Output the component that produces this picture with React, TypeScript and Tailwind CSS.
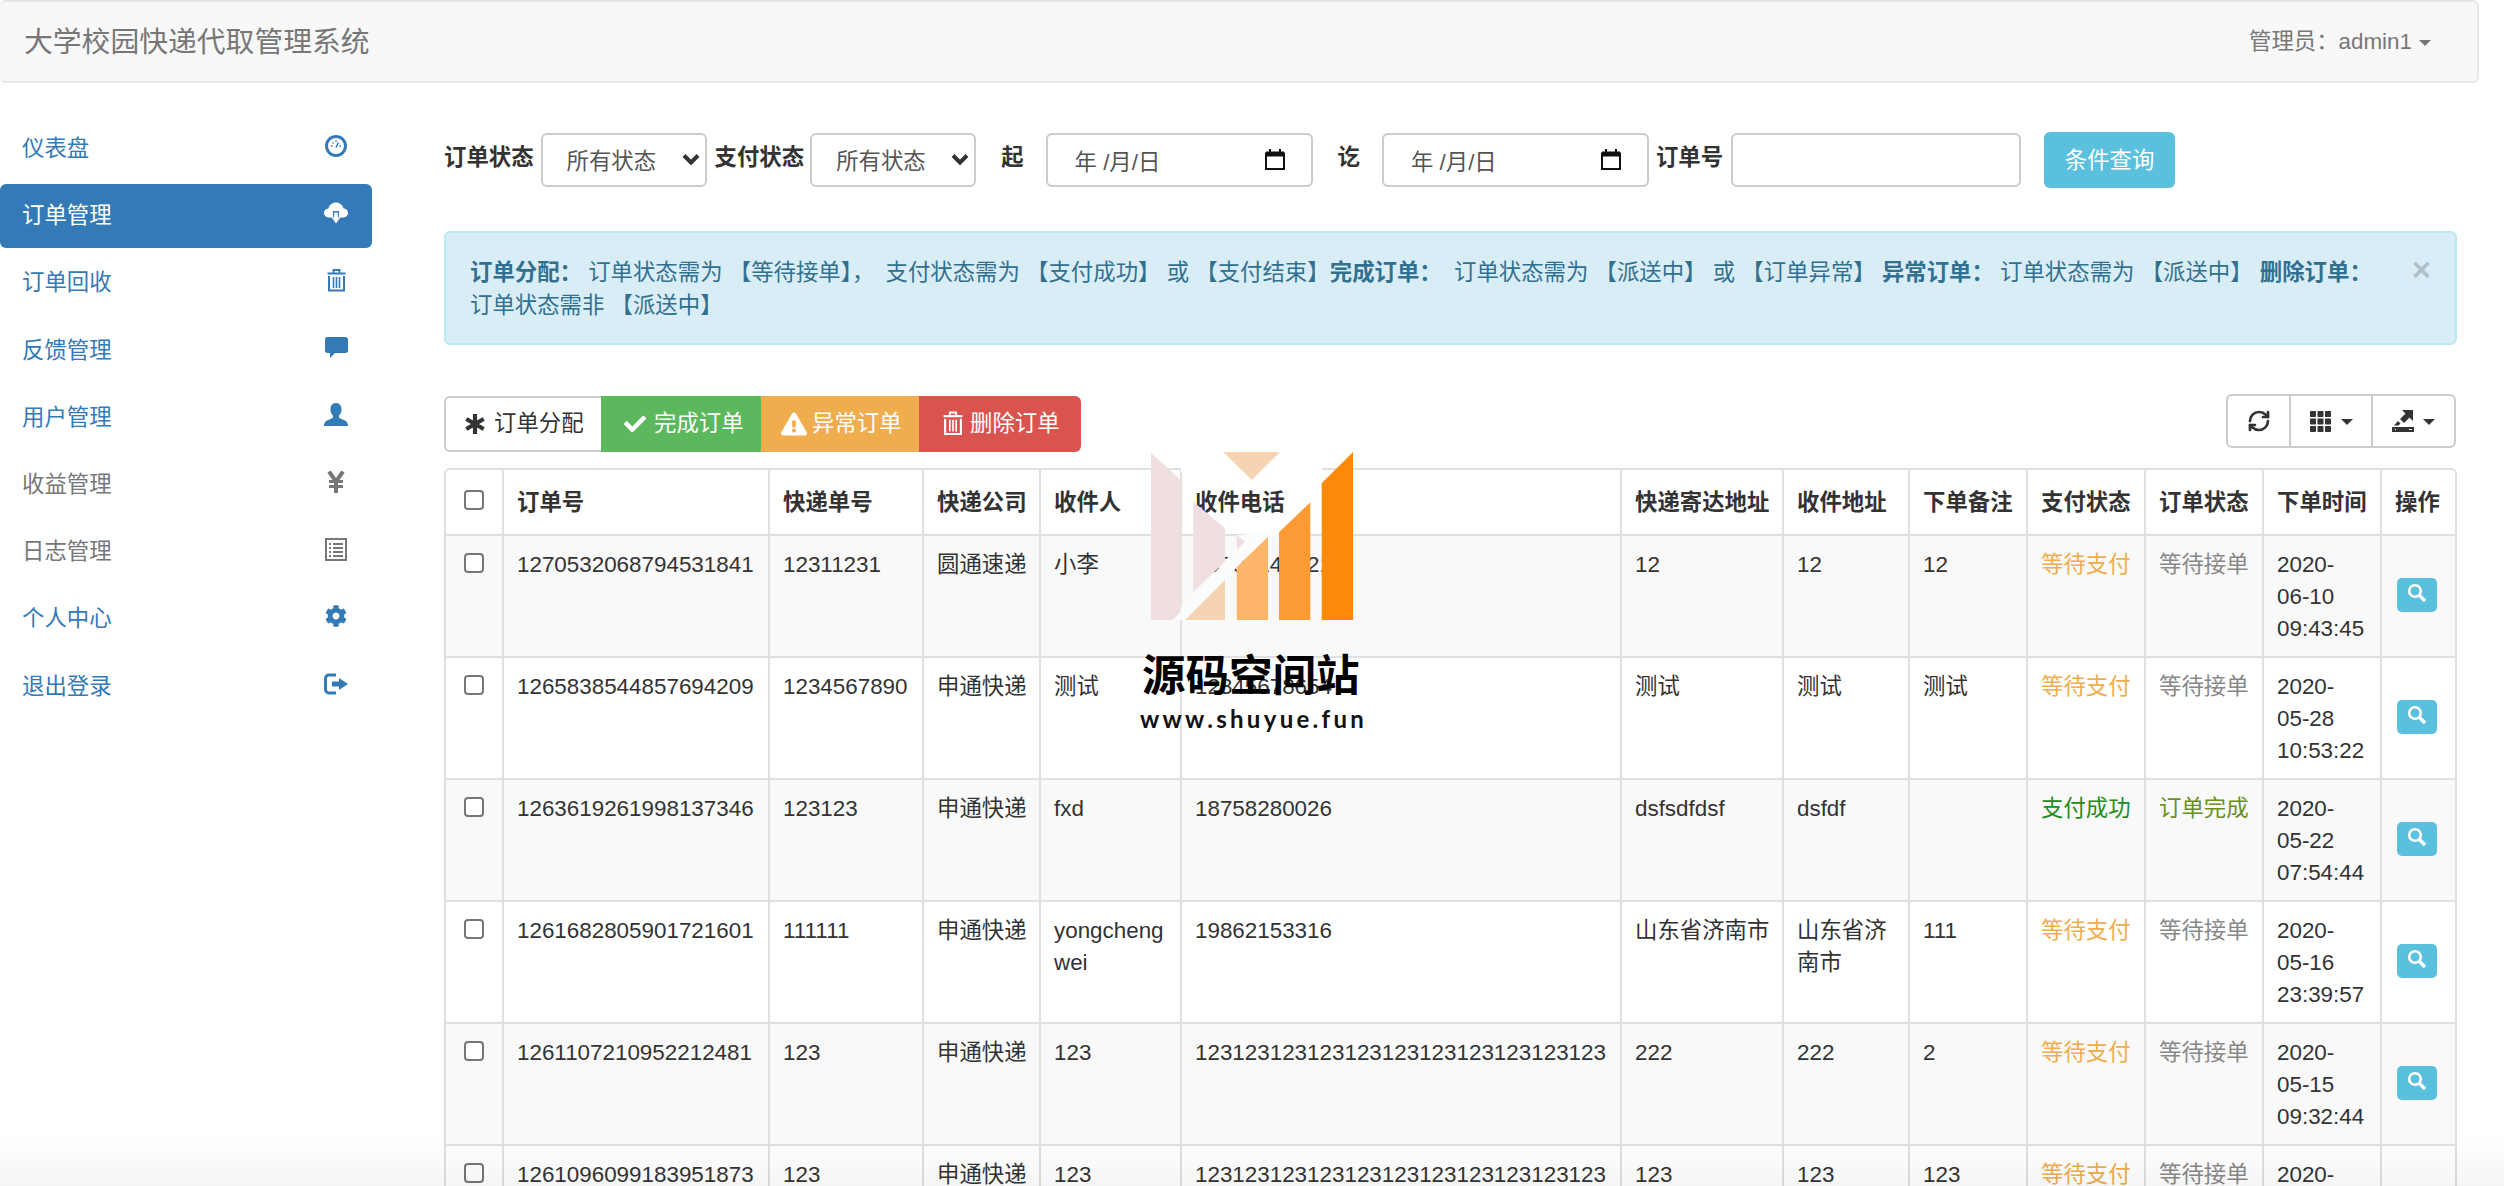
import type { ReactNode } from "react"
import { RefreshCw } from "lucide-react"
import { FaCheck, FaCog, FaExclamationTriangle } from "react-icons/fa"

const GaugeIcon = () => (
  <svg width="22" height="22" viewBox="0 0 22 22" fill="none" stroke="currentColor">
    <circle cx="11" cy="11" r="9.5" strokeWidth="3" />
    <path d="M11 12.5 13.5 7.5" strokeWidth="1.6" />
    <path d="M6 11h1.5M14.5 11H16M11 5.5V7M7.5 7.5l1 1" strokeWidth="1.4" />
  </svg>
)

const CloudIcon = () => (
  <svg width="24" height="22" viewBox="0 0 24 22" fill="currentColor">
    <path
      fillRule="evenodd"
      d="M5 15.5C2.2 15.5 0 13.6 0 11s2-4.4 4.4-4.5C5.3 3 8.2 0.5 12 0.5c3.7 0 6.5 2.4 7.5 5.7 2.600 0.300 4.500 2.200 4.500 4.800 0 2.600-2.200 4.500-5 4.500h-2.200l-1.800 0V9H9v6.500z"
    />
    <path d="M10.200 10.500h3.600v4.700h2.700L12 21.500l-4.500-6.300h2.700z" />
  </svg>
)

const TrashIcon = ({ w = 19, h = 24 }: { w?: number; h?: number }) => (
  <svg width={w} height={h} viewBox="0 0 19 24" fill="none" stroke="currentColor">
    <path d="M0.500 5.500h18" strokeWidth="2" />
    <path d="M6.500 5V2h6v3" strokeWidth="1.800" />
    <path d="M2 8v14.500h15V8" strokeWidth="2" />
    <path d="M6.500 9v11M9.500 9v11M12.500 9v11" strokeWidth="1.600" />
  </svg>
)

const CommentIcon = () => (
  <svg width="23" height="21" viewBox="0 0 23 21" fill="currentColor">
    <path d="M2.500 0h18A2.500 2.500 0 0 1 23 2.500v11a2.500 2.500 0 0 1-2.500 2.500H10l-5 5v-5H2.500A2.500 2.500 0 0 1 0 13.500v-11A2.500 2.500 0 0 1 2.500 0z" />
  </svg>
)

const UserIcon = () => (
  <svg width="24" height="23" viewBox="0 0 24 23" fill="currentColor">
    <path d="M12 0c3.600 0 5.500 2.800 5.500 6.200 0 2.600-1 5-2.500 6.300v1.500c0 1 1 1.600 3 2.300 3.500 1.200 6 2.600 6 6.700H0c0-4.100 2.500-5.500 6-6.700 2-.7 3-1.300 3-2.300v-1.500C7.500 11.200 6.500 8.800 6.500 6.200 6.500 2.800 8.400 0 12 0z" />
  </svg>
)

const YenIcon = () => (
  <svg width="18" height="22" viewBox="0 0 18 22" fill="none" stroke="currentColor" strokeWidth="4">
    <path d="M2 0.500 9 10.500 16 0.500" />
    <path d="M9 9.500V22" />
    <path d="M2 10.500h14M2 15.500h14" strokeWidth="3" />
  </svg>
)

const ListAltIcon = () => (
  <svg width="22" height="23" viewBox="0 0 22 23" fill="none" stroke="currentColor">
    <rect x="1" y="1" width="20" height="21" strokeWidth="2" />
    <path d="M4 6h2M4 10h2M4 14h2M4 18h2M8 6h10M8 10h10M8 14h10M8 18h10" strokeWidth="1.800" />
  </svg>
)

const LogoutIcon = () => (
  <svg width="24" height="22" viewBox="0 0 24 22" fill="none" stroke="currentColor">
    <path d="M12 2H5a3.500 3.500 0 0 0-3.500 3.500v11A3.500 3.500 0 0 0 5 20h7" strokeWidth="3" />
    <path d="M8 8.500h7V5l9 6-9 6v-3.500H8z" fill="currentColor" stroke="none" />
  </svg>
)

const SearchIcon = () => (
  <svg width="20" height="20" viewBox="0 0 20 20" fill="none" stroke="currentColor">
    <circle cx="8" cy="8" r="5.800" strokeWidth="2.600" />
    <path d="M12.500 12.500 18 18" strokeWidth="3.400" />
  </svg>
)

const CalendarIcon = () => (
  <svg width="20" height="21" viewBox="0 0 20 21" fill="none" stroke="#111">
    <path d="M1 5h18v15H1z" strokeWidth="2" />
    <path d="M1 3h18v4H1z" fill="#111" strokeWidth="1" />
    <path d="M5 0v4M15 0v4" strokeWidth="2" />
  </svg>
)

const GridIcon = () => (
  <svg width="22" height="21" viewBox="0 0 22 21" fill="currentColor">
    {[0, 7.500, 15].map((y) =>
      [0, 7.500, 15].map((x) => <rect key={`${x}-${y}`} x={x} y={y} width="6" height="6" rx="0.800" />)
    )}
  </svg>
)

const ExportIcon = () => (
  <svg width="22" height="22" viewBox="0 0 22 22" fill="currentColor">
    <path fillRule="evenodd" d="M0 17h22v5H0zM3 19v1h1v-1zM17 19v1h3v-1z" />
    <path d="M10 0h11v11l-3.500-3.500-5.500 5.500-4-4 5.500-5.500z" />
    <path d="M2 15.500 6 11l2.500 2.500-2 2z" />
  </svg>
)

const AsteriskIcon = () => (
  <svg width="20" height="20" viewBox="0 0 20 20" fill="none" stroke="currentColor" strokeWidth="4.200">
    <path d="M10 0v20M1.300 5l17.400 10M1.300 15 18.700 5" />
  </svg>
)

const Caret = ({ className = "" }: { className?: string }) => (
  <span className={`inline-block h-0 w-0 border-x-[6px] border-t-[6px] border-x-transparent border-t-current ${className}`} />
)

const Chevron = () => (
  <svg width="18" height="12" viewBox="0 0 18 12" fill="none" stroke="#333" strokeWidth="4" className="pointer-events-none absolute right-[7px] top-[20px]">
    <path d="M2 2.500 9 9.500 16 2.500" />
  </svg>
)

type NavItem = { label: string; icon: ReactNode; active?: boolean; muted?: boolean }

const navItems: NavItem[] = [
  { label: "仪表盘", icon: <GaugeIcon /> },
  { label: "订单管理", icon: <CloudIcon />, active: true },
  { label: "订单回收", icon: <TrashIcon /> },
  { label: "反馈管理", icon: <CommentIcon /> },
  { label: "用户管理", icon: <UserIcon /> },
  { label: "收益管理", icon: <YenIcon />, muted: true },
  { label: "日志管理", icon: <ListAltIcon />, muted: true },
  { label: "个人中心", icon: <FaCog size={22} /> },
  { label: "退出登录", icon: <LogoutIcon /> },
]

const columns = ["订单号", "快递单号", "快递公司", "收件人", "收件电话", "快递寄达地址", "收件地址", "下单备注", "支付状态", "订单状态", "下单时间", "操作"]

type Order = {
  id: string
  no: string
  company: string
  name: ReactNode
  phone: string
  from: string
  to: string
  note: string
  pay: string
  state: string
  date: string
  time: string
}

const longNo = "123123123123123123123123123123123"

const orders: Order[] = [
  { id: "1270532068794531841", no: "12311231", company: "圆通速递", name: "小李", phone: "18306144221", from: "12", to: "12", note: "12", pay: "等待支付", state: "等待接单", date: "06-10", time: "09:43:45" },
  { id: "1265838544857694209", no: "1234567890", company: "申通快递", name: "测试", phone: "12345678654", from: "测试", to: "测试", note: "测试", pay: "等待支付", state: "等待接单", date: "05-28", time: "10:53:22" },
  { id: "1263619261998137346", no: "123123", company: "申通快递", name: "fxd", phone: "18758280026", from: "dsfsdfdsf", to: "dsfdf", note: "", pay: "支付成功", state: "订单完成", date: "05-22", time: "07:54:44" },
  { id: "1261682805901721601", no: "111111", company: "申通快递", name: <>yongcheng<br />wei</>, phone: "19862153316", from: "山东省济南市", to: "山东省济南市", note: "111", pay: "等待支付", state: "等待接单", date: "05-16", time: "23:39:57" },
  { id: "1261107210952212481", no: "123", company: "申通快递", name: "123", phone: longNo, from: "222", to: "222", note: "2", pay: "等待支付", state: "等待接单", date: "05-15", time: "09:32:44" },
  { id: "1261096099183951873", no: "123", company: "申通快递", name: "123", phone: longNo, from: "123", to: "123", note: "123", pay: "等待支付", state: "等待接单", date: "05-15", time: "09:10:21" },
]

const td = "border-r-2 border-b-2 border-[#e0e0e0] pl-[13px] pr-[8px] pt-[13px] align-top last:border-r-0"
const th = "h-[66px] border-r-2 border-b-2 border-[#e0e0e0] pl-[13px] pr-[8px] pt-[2px] text-left align-middle font-bold last:border-r-0"

function DateBox({ className }: { className: string }) {
  return (
    <div className={`flex h-[54px] w-[267px] items-center justify-between rounded-[6px] border-2 border-[#ccc] bg-white pl-[27px] pr-[26px] pt-[6px] text-[#555] ${className}`}>
      <span>年 /月/日</span>
      <span className="-mt-[8px]"><CalendarIcon /></span>
    </div>
  )
}

function StatusSelect({ className }: { className: string }) {
  return (
    <div className={`relative ${className}`}>
      <select className="h-[54px] w-[166px] appearance-none rounded-[6px] border-2 border-[#ccc] bg-white pl-[24px] pt-[3px] text-[#555]">
        <option>所有状态</option>
      </select>
      <Chevron />
    </div>
  )
}

function Watermark() {
  return (
    <div className="pointer-events-none absolute left-[1130px] top-[440px] w-[260px]">
      <svg width="260" height="190" viewBox="0 0 260 190">
        <path d="M51 28h141v4H51z" fill="#fff" />
        <path d="M43 180h12l40-40 12-13 31-31-23 5v-6h-8v8L95 122 43 175z" fill="#fbfcfd" />
        <path d="M115 93h34v5h-34z" fill="#fbfbfb" />
        <polygon points="21,12.700 50.700,40 50.700,171.700 42.700,180 21,180" fill="#f0dfe0" />
        <polygon points="63.300,61.700 95,88.300 95,121.700 63.300,151.700" fill="#f0dfe0" />
        <polygon points="106.700,95 115,101.700 106.700,110" fill="#f0dfe0" />
        <polygon points="93.300,12 150,12 121.700,40" fill="#f6d3b3" />
        <polygon points="55,180 95,140 95,180" fill="#f6d3b3" />
        <polygon points="106.700,180 106.700,127.300 138,96.700 138,180" fill="#fdb56a" />
        <polygon points="149,180 149,92.300 180.300,62.300 180.300,180" fill="#fc9a33" />
        <polygon points="191.700,180 191.700,43.300 223,12 223,180" fill="#fb8a0a" />
      </svg>
      <div className="ml-[12px] mt-[21px] whitespace-nowrap text-[43.500px] font-bold leading-[50px] text-black">源码空间站</div>
      <div className="ml-[10px] mt-[4px] whitespace-nowrap text-[24px] font-bold leading-[28px] tracking-[3.300px] text-[#111] [font-family:Lato,sans-serif]">www.shuyue.fun</div>
    </div>
  )
}

export default function App() {
  return (
    <div className="relative h-[1186px] w-[2504px] overflow-hidden bg-white text-[22.400px] leading-[32px] text-[#333] [font-family:Liberation_Sans,Noto_Sans_CJK_SC,sans-serif]">
      <nav className="flex h-[83px] w-[2479px] items-center justify-between rounded-[6px] border-2 border-l-0 border-[#e7e7e7] bg-[#f8f8f8] pl-[24px] pr-[46px] text-[#777]">
        <span className="text-[28.800px]">大学校园快递代取管理系统</span>
        <span className="flex items-center gap-[7px]">
          管理员：admin1
          <Caret className="mt-[3px]" />
        </span>
      </nav>

      <div className="flex">
        <aside className="w-[372px] shrink-0 pt-[34px]">
          {navItems.map((item) => (
            <a
              key={item.label}
              className={`mb-[3.200px] flex h-[64px] items-center justify-between rounded-[6px] pl-[22px] pr-[24px] ${
                item.active ? "bg-[#337ab7] text-white" : item.muted ? "text-[#777]" : "text-[#337ab7]"
              }`}
            >
              <span>{item.label}</span>
              <span className="-mt-[6px] flex w-[24px] justify-center">{item.icon}</span>
            </a>
          ))}
        </aside>

        <main className="ml-[72px] w-[2012px]">
          <div className="mt-[49px] flex h-[56px] items-center">
            <b className="-mt-[4px]">订单状态</b>
            <StatusSelect className="ml-[7px]" />
            <b className="-mt-[4px] ml-[8px]">支付状态</b>
            <StatusSelect className="ml-[6px]" />
            <b className="-mt-[4px] ml-[25px]">起</b>
            <DateBox className="ml-[22px]" />
            <b className="-mt-[4px] ml-[25px]">讫</b>
            <DateBox className="ml-[22px]" />
            <b className="-mt-[4px] ml-[7px]">订单号</b>
            <input className="ml-[8px] h-[54px] w-[290px] rounded-[6px] border-2 border-[#ccc] bg-white" />
            <button className="ml-[23px] h-[56px] w-[131px] rounded-[6px] bg-[#5bc0de] pt-[2px] text-white">条件查询</button>
          </div>

          <div className="mt-[43px] flex h-[114px] w-[2013px] justify-between rounded-[6px] border-2 border-[#bce8f1] bg-[#d9edf7] pl-[24px] pr-[24px] pt-[23px] leading-[33px] text-[#31708f]">
            <p>
              <b>订单分配：</b> 订单状态需为 【等待接单】， <span className="ml-[5px]">支付状态需为</span> 【支付成功】 或 【支付结束】 <b className="-ml-[6px] mr-[6px]">完成订单：</b> 订单状态需为 【派送中】 或 【订单异常】 <b>异常订单：</b> 订单状态需为 【派送中】 <b className="ml-[1px]">删除订单：</b>
              <br />
              订单状态需非 【派送中】
            </p>
            <span className="-mt-[3px] text-[33px] font-bold leading-[33px] text-black/20">×</span>
          </div>

          <div className="mt-[49px] flex h-[58px] items-start justify-between">
            <div className="mt-[2px] flex h-[56px] items-stretch">
              <button className="flex w-[157px] items-center gap-[9px] rounded-l-[6px] border-2 border-r-0 border-[#ccc] bg-white pl-[19px]">
                <AsteriskIcon />
                订单分配
              </button>
              <button className="flex w-[160px] items-center gap-[8px] bg-[#5cb85c] pl-[23px] text-white">
                <FaCheck size={22} />
                完成订单
              </button>
              <button className="flex w-[158px] items-center gap-[5px] bg-[#f0ad4e] pl-[20px] text-white">
                <FaExclamationTriangle size={26} />
                异常订单
              </button>
              <button className="flex w-[162px] items-center gap-[7px] rounded-r-[6px] bg-[#d9534f] pl-[24px] text-white">
                <span className="-mt-[3px]"><TrashIcon w={20} h={26} /></span>
                删除订单
              </button>
            </div>
            <div className="flex h-[54px] items-stretch rounded-[6px] border-2 border-[#ccc]">
              <button className="flex w-[63px] items-center justify-center border-r-2 border-[#ccc]">
                <RefreshCw size={24} strokeWidth={2.700} />
              </button>
              <button className="flex w-[82px] items-center justify-center gap-[9px] border-r-2 border-[#ccc]">
                <GridIcon />
                <Caret className="mt-[2px]" />
              </button>
              <button className="flex w-[81px] items-center justify-center gap-[9px]">
                <ExportIcon />
                <Caret className="mt-[2px]" />
              </button>
            </div>
          </div>

          <div className="mt-[16px] w-[2013px] rounded-[6px] border-2 border-[#e0e0e0]">
            <table className="w-[2009px] table-fixed border-separate border-spacing-0">
              <colgroup>
                {["w-[58px]", "w-[266px]", "w-[154px]", "w-[117px]", "w-[141px]", "w-[440px]", "w-[162px]", "w-[126px]", "w-[118px]", "w-[118px]", "w-[118px]", "w-[118px]", "w-[73px]"].map((c, i) => (
                  <col key={i} className={c} />
                ))}
              </colgroup>
              <thead>
                <tr>
                  <th className="h-[66px] border-r-2 border-b-2 border-[#e0e0e0] align-middle">
                    <span className="flex justify-center pr-[1px]">
                      <span className="-mt-[4px] h-[20px] w-[20px] rounded-[4px] border-2 border-[#767676] bg-white" />
                    </span>
                  </th>
                  {columns.map((c) => (
                    <th key={c} className={th}>{c}</th>
                  ))}
                </tr>
              </thead>
              <tbody>
                {orders.map((o, i) => (
                  <tr key={o.id} className={`h-[122px] ${i % 2 === 0 ? "bg-[#f9f9f9]" : "bg-white"}`}>
                    <td className="border-r-2 border-b-2 border-[#e0e0e0] pt-[17px] align-top">
                      <span className="flex justify-center pr-[1px]">
                        <span className="h-[20px] w-[20px] rounded-[4px] border-2 border-[#767676] bg-white" />
                      </span>
                    </td>
                    <td className={td}>{o.id}</td>
                    <td className={td}>{o.no}</td>
                    <td className={td}>{o.company}</td>
                    <td className={td}>{o.name}</td>
                    <td className={td}>{o.phone}</td>
                    <td className={td}>{o.from}</td>
                    <td className={td}>{o.to}</td>
                    <td className={td}>{o.note}</td>
                    <td className={`${td} ${o.pay === "支付成功" ? "text-[#228b22]" : "text-[#f0ad4e]"}`}>{o.pay}</td>
                    <td className={`${td} ${o.state === "订单完成" ? "text-[#6b8e23]" : "text-[#888]"}`}>{o.state}</td>
                    <td className={td}>
                      2020-<br />{o.date}<br />{o.time}
                    </td>
                    <td className="border-b-2 border-[#e0e0e0] align-middle">
                      <button className="-mt-[2px] ml-[15px] flex h-[34px] w-[40px] items-center justify-center rounded-[5px] bg-[#5bc0de] pb-[4px] text-white">
                        <SearchIcon />
                      </button>
                    </td>
                  </tr>
                ))}
              </tbody>
            </table>
          </div>
        </main>
      </div>

      <Watermark />
      <div className="pointer-events-none absolute inset-x-0 bottom-0 h-[50px] bg-gradient-to-t from-black/[0.04] to-transparent" />
    </div>
  )
}
